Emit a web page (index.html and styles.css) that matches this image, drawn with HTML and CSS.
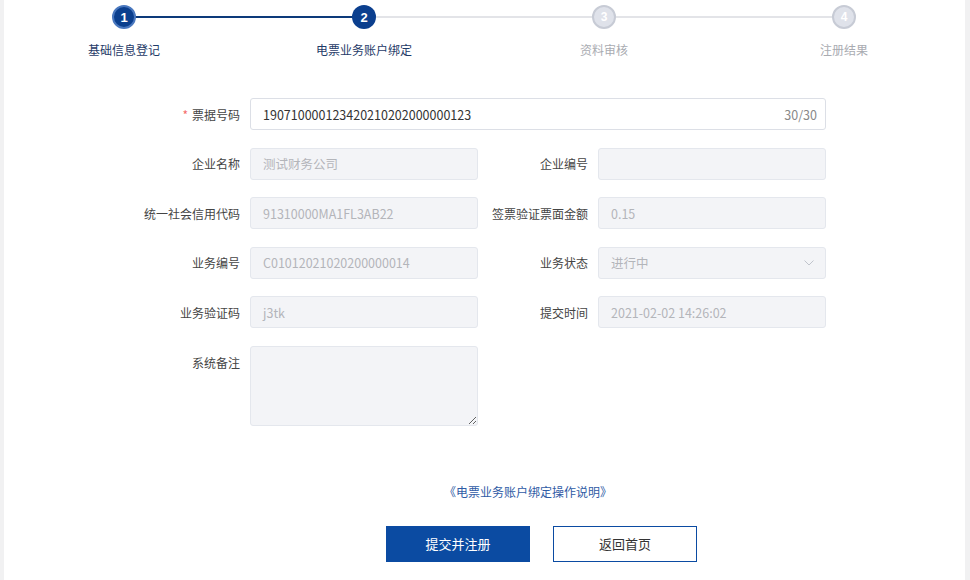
FILE: index.html
```html
<!DOCTYPE html>
<html lang="zh">
<head>
<meta charset="utf-8">
<link rel="stylesheet" href="styles.css">
</head>
<body>
<div class="page">
  <div class="steps">
    <div class="step done line-active"><span class="dot">1</span><span class="step-label">基础信息登记</span></div>
    <div class="step current"><span class="dot">2</span><span class="step-label">电票业务账户绑定</span></div>
    <div class="step todo"><span class="dot">3</span><span class="step-label">资料审核</span></div>
    <div class="step todo last"><span class="dot">4</span><span class="step-label">注册结果</span></div>
  </div>

  <div class="form">
    <label class="lbl"><span class="req">*</span>票据号码</label>
    <div class="field wide">
      <span class="val">190710000123420210202000000123</span>
      <span class="count">30/30</span>
    </div>

    <label class="lbl">企业名称</label>
    <div class="field dis"><span class="val">测试财务公司</span></div>
    <label class="lbl">企业编号</label>
    <div class="field dis"><span class="val"></span></div>

    <label class="lbl">统一社会信用代码</label>
    <div class="field dis"><span class="val">91310000MA1FL3AB22</span></div>
    <label class="lbl">签票验证票面金额</label>
    <div class="field dis"><span class="val">0.15</span></div>

    <label class="lbl">业务编号</label>
    <div class="field dis"><span class="val">C01012021020200000014</span></div>
    <label class="lbl">业务状态</label>
    <div class="field dis"><span class="val">进行中</span>
      <svg class="chev" width="10" height="6" viewBox="0 0 10 6"><path d="M0.5 0.5 L5 5 L9.5 0.5" fill="none" stroke="#c0c4cc" stroke-width="1"/></svg>
    </div>

    <label class="lbl">业务验证码</label>
    <div class="field dis"><span class="val">j3tk</span></div>
    <label class="lbl">提交时间</label>
    <div class="field dis"><span class="val">2021-02-02 14:26:02</span></div>

    <label class="lbl lbl-top">系统备注</label>
    <textarea class="area" disabled></textarea>
  </div>

  <div class="link-row"><a class="guide">《电票业务账户绑定操作说明》</a></div>

  <div class="actions">
    <button class="btn primary">提交并注册</button>
    <button class="btn ghost">返回首页</button>
  </div>
</div>
</body>
</html>
```

FILE: styles.css
```css
* { box-sizing: border-box; }
html, body { margin: 0; padding: 0; }
body {
  background: #f1f1f2;
  font-family: "Noto Sans CJK SC", "Noto Sans", sans-serif;
  font-size: 12px;
  color: #444;
  width: 970px;
  height: 580px;
  overflow: hidden;
}
.page {
  margin: 0 5px 0 4px;
  background: #fff;
  height: 580px;
}

/* steps */
.steps {
  display: flex;
  padding-top: 5px;
  height: 98px;
}
.step {
  width: 240px;
  display: flex;
  flex-direction: column;
  align-items: center;
  position: relative;
}
.step::after {
  content: "";
  position: absolute;
  left: 50%;
  width: 240px;
  top: 11px;
  height: 2px;
  background: #e3e4e8;
  z-index: 0;
}
.step.line-active::after { background: #0d3a7a; }
.step.last::after { display: none; }
.dot {
  position: relative;
  z-index: 1;
  width: 24px;
  height: 24px;
  border-radius: 50%;
  display: flex;
  align-items: center;
  justify-content: center;
  font-family: "Liberation Sans", Arial, sans-serif;
  font-weight: bold;
  font-size: 13px;
  color: #fff;
}
.done .dot { background: #0b3f8e; border: 2px solid #4a78bf; }
.current .dot { background: #0b3f8e; }
.todo .dot { background: #dfe2ea; border: 2px solid #c7cbd5; font-size: 12px; }
.step-label {
  margin-top: 13px;
  font-size: 12px;
  line-height: 16px;
}
.done .step-label, .current .step-label { color: #1f3b68; }
.todo .step-label { color: #a9abb1; }

/* form */
.form {
  display: grid;
  grid-template-columns: 120px 228px 120px 228px;
  grid-auto-rows: 32px;
  row-gap: 17.6px;
  margin-left: 126px;
  width: 696px;
}
.lbl {
  display: flex;
  align-items: center;
  justify-content: flex-end;
  padding-right: 10px;
  font-size: 12px;
  color: #444;
  white-space: nowrap;
}
.lbl-top { align-items: flex-start; padding-top: 8px; }
.req { color: #f56c6c; margin-right: 4px; }
.field {
  display: flex;
  align-items: center;
  border: 1px solid #dcdfe6;
  border-radius: 3px;
  padding: 0 8px 0 12px;
  background: #fff;
  font-size: 12.5px;
  color: #333;
}
.field.wide { grid-column: 2 / 5; }
.val { flex: 1; white-space: nowrap; }
.count { color: #888; font-size: 12.5px; }
.field.dis {
  background: #f3f4f7;
  border-color: #e4e7ed;
  color: #b3b5ba;
}
.chev { margin-right: 3px; }
.area {
  grid-row: span 2;
  height: 80px;
  align-self: start;
  width: 228px;
  background: #f3f4f7;
  border: 1px solid #e4e7ed;
  border-radius: 3px;
  margin: 0;
  font-family: inherit;
}

/* link + buttons */
.link-row {
  margin-top: 52px;
  padding-left: 440px;
  height: 24px;
  line-height: 24px;
}
.guide { color: #2f5ba5; font-size: 12px; }
.actions {
  margin-top: 22px;
  padding-left: 382px;
  display: flex;
  gap: 23px;
}
.btn {
  width: 144px;
  height: 36px;
  font-family: inherit;
  font-size: 13px;
  cursor: pointer;
  border-radius: 0;
}
.primary { background: #0b4ba2; color: #fff; border: 1px solid #0b4ba2; }
.ghost { background: #fff; color: #333; border: 1px solid #0b4ba2; }
```
